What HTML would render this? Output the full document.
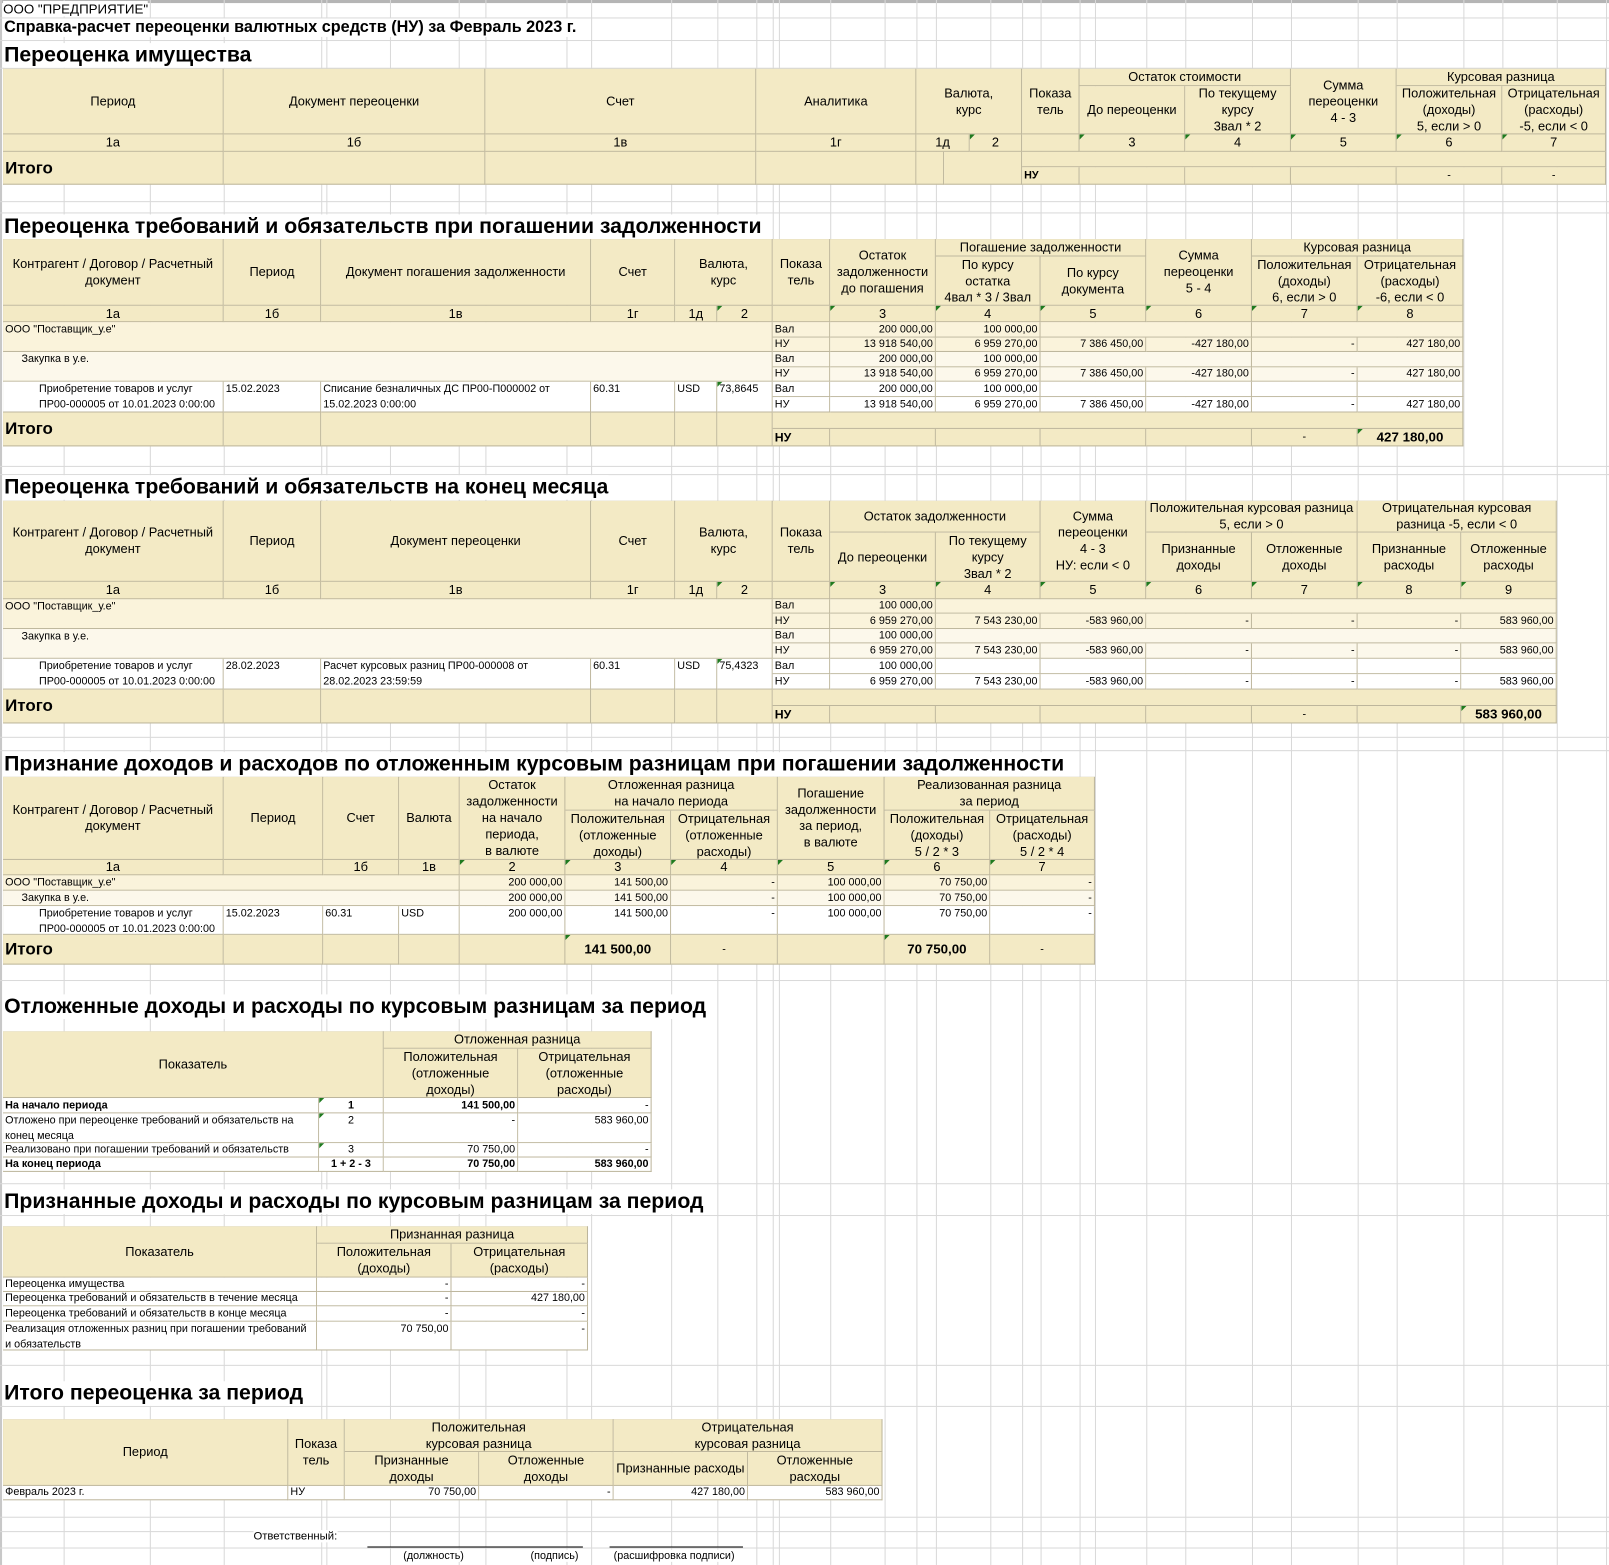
<!DOCTYPE html>
<html><head><meta charset="utf-8">
<style>
html,body{margin:0;padding:0;background:#fff;width:1609px;height:1565px;overflow:hidden}
#w{position:absolute;left:0;top:0;width:1568px;height:1525px;transform:scale(1.0262);transform-origin:0 0;font-family:"Liberation Sans Narrow","Arial Narrow","Liberation Sans","Noto Sans CJK SC",sans-serif;color:#000}
.vl{position:absolute;top:0;height:1525px;width:1px;background:#d9d9d9}
.hl{position:absolute;left:0;width:1568px;height:1px;background:#d9d9d9}
.f{position:absolute;box-sizing:border-box;border-top:1px solid #a9a9a9;border-left:1px solid #b8b29a}
.c{position:absolute;box-sizing:border-box;border-right:1px solid #bdb69c;border-bottom:1px solid #bdb69c;display:flex;align-items:center;justify-content:center;text-align:center;font-size:12.5px;line-height:16px;overflow:hidden;white-space:nowrap}
.h{background:#f3eac5}
.g{background:#faf3db}
.s{background:#fcf8eb}
.w{background:#fff}
.l{justify-content:flex-start;text-align:left;padding-left:2px}
.r{justify-content:flex-end;text-align:right;padding-right:2px}
.d{font-size:10.5px;line-height:14.5px}
.tp{align-items:flex-start}
.b{font-weight:bold}
.it{font-size:16.5px;font-weight:bold;font-family:"Liberation Sans",sans-serif}
.t{position:absolute;font-weight:bold;font-size:20.7px;font-family:"Liberation Sans",sans-serif;white-space:nowrap}
.tri::before{content:"";position:absolute;left:0;top:0;border-top:5px solid #1f7a1f;border-right:5px solid transparent}
.tx{position:absolute;white-space:nowrap;font-size:11px}
</style></head><body><div id="w">
<div style="position:absolute;left:0;top:0;width:1568px;height:3px;background:#b5b5b5"></div>
<div style="position:absolute;left:0;top:0;width:2px;height:1525px;background:#c8c8c8"></div>
<div class="vl" style="left:62px"></div><div class="vl" style="left:146px"></div><div class="vl" style="left:218px"></div><div class="vl" style="left:313px"></div><div class="vl" style="left:318px"></div><div class="vl" style="left:380px"></div><div class="vl" style="left:447px"></div><div class="vl" style="left:473px"></div><div class="vl" style="left:552px"></div><div class="vl" style="left:576px"></div><div class="vl" style="left:654px"></div><div class="vl" style="left:699px"></div><div class="vl" style="left:737px"></div><div class="vl" style="left:753px"></div><div class="vl" style="left:759px"></div><div class="vl" style="left:809px"></div><div class="vl" style="left:862px"></div><div class="vl" style="left:893px"></div><div class="vl" style="left:912px"></div><div class="vl" style="left:965px"></div><div class="vl" style="left:996px"></div><div class="vl" style="left:1014px"></div><div class="vl" style="left:1052px"></div><div class="vl" style="left:1067px"></div><div class="vl" style="left:1117px"></div><div class="vl" style="left:1155px"></div><div class="vl" style="left:1220px"></div><div class="vl" style="left:1258px"></div><div class="vl" style="left:1323px"></div><div class="vl" style="left:1361px"></div><div class="vl" style="left:1426px"></div><div class="vl" style="left:1464px"></div><div class="vl" style="left:1517px"></div><div class="vl" style="left:1565px"></div>
<div class="hl" style="top:17px"></div><div class="hl" style="top:39px"></div><div class="hl" style="top:66px"></div><div class="hl" style="top:196px"></div><div class="hl" style="top:207px"></div><div class="hl" style="top:454px"></div><div class="hl" style="top:462px"></div><div class="hl" style="top:718px"></div><div class="hl" style="top:731px"></div><div class="hl" style="top:955px"></div><div class="hl" style="top:1153px"></div><div class="hl" style="top:1184px"></div><div class="hl" style="top:1330px"></div><div class="hl" style="top:1370px"></div><div class="hl" style="top:1478px"></div><div class="hl" style="top:1492px"></div><div class="hl" style="top:1508px"></div>

<div class="tx" style="left:3px;top:1px;font-size:13px;background:#fff">ООО "ПРЕДПРИЯТИЕ"</div>
<div class="tx" style="left:4px;top:18px;font-size:15.8px;font-weight:bold;font-family:'Liberation Sans',sans-serif;background:#fff">Справка-расчет переоценки валютных средств (НУ) за Февраль 2023 г.</div>
<div class="t" style="left:4px;top:42px;background:#fff">Переоценка имущества</div>

<!-- S1 -->
<div class="f" style="left:3px;top:67px;width:1562px;height:113px"></div>
<div class="c h" style="left:3px;top:67px;width:215px;height:64px">Период</div>
<div class="c h" style="left:218px;top:67px;width:255px;height:64px">Документ переоценки</div>
<div class="c h" style="left:473px;top:67px;width:264px;height:64px">Счет</div>
<div class="c h" style="left:737px;top:67px;width:156px;height:64px">Аналитика</div>
<div class="c h" style="left:893px;top:67px;width:103px;height:64px">Валюта,<br>курс</div>
<div class="c h" style="left:996px;top:67px;width:56px;height:64px">Показа<br>тель</div>
<div class="c h" style="left:1052px;top:67px;width:206px;height:17px">Остаток стоимости</div>
<div class="c h" style="left:1052px;top:84px;width:103px;height:47px">До переоценки</div>
<div class="c h" style="left:1155px;top:84px;width:103px;height:47px">По текущему<br>курсу<br>3вал * 2</div>
<div class="c h" style="left:1258px;top:67px;width:103px;height:64px">Сумма<br>переоценки<br>4 - 3</div>
<div class="c h" style="left:1361px;top:67px;width:204px;height:17px">Курсовая разница</div>
<div class="c h" style="left:1361px;top:84px;width:103px;height:47px">Положительная<br>(доходы)<br>5, если &gt; 0</div>
<div class="c h" style="left:1464px;top:84px;width:101px;height:47px">Отрицательная<br>(расходы)<br>-5, если &lt; 0</div>
<div class="c h" style="left:3px;top:131px;width:215px;height:17px">1а</div>
<div class="c h" style="left:218px;top:131px;width:255px;height:17px">1б</div>
<div class="c h" style="left:473px;top:131px;width:264px;height:17px">1в</div>
<div class="c h" style="left:737px;top:131px;width:156px;height:17px">1г</div>
<div class="c h" style="left:893px;top:131px;width:52px;height:17px">1д</div>
<div class="c h tri" style="left:945px;top:131px;width:51px;height:17px">2</div>
<div class="c h" style="left:996px;top:131px;width:56px;height:17px"></div>
<div class="c h tri" style="left:1052px;top:131px;width:103px;height:17px">3</div>
<div class="c h tri" style="left:1155px;top:131px;width:103px;height:17px">4</div>
<div class="c h tri" style="left:1258px;top:131px;width:103px;height:17px">5</div>
<div class="c h tri" style="left:1361px;top:131px;width:103px;height:17px">6</div>
<div class="c h tri" style="left:1464px;top:131px;width:101px;height:17px">7</div>
<div class="c h l it" style="left:3px;top:148px;width:215px;height:32px">Итого</div>
<div class="c h" style="left:218px;top:148px;width:255px;height:32px"></div>
<div class="c h" style="left:473px;top:148px;width:264px;height:32px"></div>
<div class="c h" style="left:737px;top:148px;width:156px;height:32px"></div>
<div class="c h" style="left:893px;top:148px;width:27px;height:32px"></div>
<div class="c h" style="left:920px;top:148px;width:76px;height:32px"></div>
<div class="c h" style="left:996px;top:148px;width:569px;height:15px"></div>
<div class="c h l b d" style="left:996px;top:163px;width:56px;height:17px">НУ</div>
<div class="c h" style="left:1052px;top:163px;width:103px;height:17px"></div>
<div class="c h" style="left:1155px;top:163px;width:103px;height:17px"></div>
<div class="c h" style="left:1258px;top:163px;width:103px;height:17px"></div>
<div class="c h d" style="left:1361px;top:163px;width:103px;height:17px">-</div>
<div class="c h d" style="left:1464px;top:163px;width:101px;height:17px">-</div>

<!-- S2 -->
<div class="t" style="left:4px;top:209px;background:#fff">Переоценка требований и обязательств при погашении задолженности</div>
<div class="f" style="left:3px;top:233px;width:1423px;height:202px"></div>
<div class="c h" style="left:3px;top:233px;width:215px;height:65px">Контрагент / Договор / Расчетный<br>документ</div>
<div class="c h" style="left:218px;top:233px;width:95px;height:65px">Период</div>
<div class="c h" style="left:313px;top:233px;width:263px;height:65px">Документ погашения задолженности</div>
<div class="c h" style="left:576px;top:233px;width:82px;height:65px">Счет</div>
<div class="c h" style="left:658px;top:233px;width:95px;height:65px">Валюта,<br>курс</div>
<div class="c h" style="left:753px;top:233px;width:56px;height:65px">Показа<br>тель</div>
<div class="c h" style="left:809px;top:233px;width:103px;height:65px">Остаток<br>задолженности<br>до погашения</div>
<div class="c h" style="left:912px;top:233px;width:205px;height:17px">Погашение задолженности</div>
<div class="c h" style="left:912px;top:250px;width:102px;height:48px">По курсу<br>остатка<br>4вал * 3 / 3вал</div>
<div class="c h" style="left:1014px;top:250px;width:103px;height:48px">По курсу<br>документа</div>
<div class="c h" style="left:1117px;top:233px;width:103px;height:65px">Сумма<br>переоценки<br>5 - 4</div>
<div class="c h" style="left:1220px;top:233px;width:206px;height:17px">Курсовая разница</div>
<div class="c h" style="left:1220px;top:250px;width:103px;height:48px">Положительная<br>(доходы)<br>6, если &gt; 0</div>
<div class="c h" style="left:1323px;top:250px;width:103px;height:48px">Отрицательная<br>(расходы)<br>-6, если &lt; 0</div>
<div class="c h" style="left:3px;top:298px;width:215px;height:16px">1а</div>
<div class="c h" style="left:218px;top:298px;width:95px;height:16px">1б</div>
<div class="c h" style="left:313px;top:298px;width:263px;height:16px">1в</div>
<div class="c h" style="left:576px;top:298px;width:82px;height:16px">1г</div>
<div class="c h" style="left:658px;top:298px;width:41px;height:16px">1д</div>
<div class="c h tri" style="left:699px;top:298px;width:54px;height:16px">2</div>
<div class="c h" style="left:753px;top:298px;width:56px;height:16px"></div>
<div class="c h tri" style="left:809px;top:298px;width:103px;height:16px">3</div>
<div class="c h tri" style="left:912px;top:298px;width:102px;height:16px">4</div>
<div class="c h tri" style="left:1014px;top:298px;width:103px;height:16px">5</div>
<div class="c h tri" style="left:1117px;top:298px;width:103px;height:16px">6</div>
<div class="c h tri" style="left:1220px;top:298px;width:103px;height:16px">7</div>
<div class="c h tri" style="left:1323px;top:298px;width:103px;height:16px">8</div>
<div class="c g l d tp" style="left:3px;top:314px;width:750px;height:29px">ООО "Поставщик_у.е"</div>
<div class="c s l d tp" style="left:3px;top:343px;width:750px;height:29px;padding-left:18px">Закупка в у.е.</div>
<div class="c w l d tp" style="left:3px;top:372px;width:215px;height:30px;padding-left:35px">Приобретение товаров и услуг<br>ПР00-000005 от 10.01.2023 0:00:00</div>
<div class="c w l d tp" style="left:218px;top:372px;width:95px;height:30px">15.02.2023</div>
<div class="c w l d tp" style="left:313px;top:372px;width:263px;height:30px">Списание безналичных ДС ПР00-П000002 от<br>15.02.2023 0:00:00</div>
<div class="c w l d tp" style="left:576px;top:372px;width:82px;height:30px">60.31</div>
<div class="c w l d tp" style="left:658px;top:372px;width:41px;height:30px">USD</div>
<div class="c w l d tp tri" style="left:699px;top:372px;width:54px;height:30px">73,8645</div>

<div class="c g l d" style="left:753px;top:314px;width:56px;height:15px">Вал</div><div class="c g r d" style="left:809px;top:314px;width:103px;height:15px">200 000,00</div><div class="c g r d" style="left:912px;top:314px;width:102px;height:15px">100 000,00</div><div class="c g" style="left:1014px;top:314px;width:206px;height:15px"></div><div class="c g" style="left:1220px;top:314px;width:206px;height:15px"></div>
<div class="c g l d" style="left:753px;top:329px;width:56px;height:14px">НУ</div><div class="c g r d" style="left:809px;top:329px;width:103px;height:14px">13 918 540,00</div><div class="c g r d" style="left:912px;top:329px;width:102px;height:14px">6 959 270,00</div><div class="c g r d" style="left:1014px;top:329px;width:103px;height:14px">7 386 450,00</div><div class="c g r d" style="left:1117px;top:329px;width:103px;height:14px">-427 180,00</div><div class="c g r d" style="left:1220px;top:329px;width:103px;height:14px">-</div><div class="c g r d" style="left:1323px;top:329px;width:103px;height:14px">427 180,00</div>
<div class="c s l d" style="left:753px;top:343px;width:56px;height:15px">Вал</div><div class="c s r d" style="left:809px;top:343px;width:103px;height:15px">200 000,00</div><div class="c s r d" style="left:912px;top:343px;width:102px;height:15px">100 000,00</div><div class="c s" style="left:1014px;top:343px;width:206px;height:15px"></div><div class="c s" style="left:1220px;top:343px;width:206px;height:15px"></div>
<div class="c s l d" style="left:753px;top:358px;width:56px;height:14px">НУ</div><div class="c s r d" style="left:809px;top:358px;width:103px;height:14px">13 918 540,00</div><div class="c s r d" style="left:912px;top:358px;width:102px;height:14px">6 959 270,00</div><div class="c s r d" style="left:1014px;top:358px;width:103px;height:14px">7 386 450,00</div><div class="c s r d" style="left:1117px;top:358px;width:103px;height:14px">-427 180,00</div><div class="c s r d" style="left:1220px;top:358px;width:103px;height:14px">-</div><div class="c s r d" style="left:1323px;top:358px;width:103px;height:14px">427 180,00</div>
<div class="c w l d" style="left:753px;top:372px;width:56px;height:15px">Вал</div><div class="c w r d" style="left:809px;top:372px;width:103px;height:15px">200 000,00</div><div class="c w r d" style="left:912px;top:372px;width:102px;height:15px">100 000,00</div><div class="c w" style="left:1014px;top:372px;width:103px;height:15px"></div><div class="c w" style="left:1117px;top:372px;width:103px;height:15px"></div><div class="c w" style="left:1220px;top:372px;width:103px;height:15px"></div><div class="c w" style="left:1323px;top:372px;width:103px;height:15px"></div>
<div class="c w l d" style="left:753px;top:387px;width:56px;height:15px">НУ</div><div class="c w r d" style="left:809px;top:387px;width:103px;height:15px">13 918 540,00</div><div class="c w r d" style="left:912px;top:387px;width:102px;height:15px">6 959 270,00</div><div class="c w r d" style="left:1014px;top:387px;width:103px;height:15px">7 386 450,00</div><div class="c w r d" style="left:1117px;top:387px;width:103px;height:15px">-427 180,00</div><div class="c w r d" style="left:1220px;top:387px;width:103px;height:15px">-</div><div class="c w r d" style="left:1323px;top:387px;width:103px;height:15px">427 180,00</div>
<div class="c h l it" style="left:3px;top:402px;width:215px;height:33px">Итого</div>
<div class="c h" style="left:218px;top:402px;width:95px;height:33px"></div><div class="c h" style="left:313px;top:402px;width:263px;height:33px"></div><div class="c h" style="left:576px;top:402px;width:82px;height:33px"></div><div class="c h" style="left:658px;top:402px;width:41px;height:33px"></div><div class="c h" style="left:699px;top:402px;width:54px;height:33px"></div>
<div class="c h" style="left:753px;top:402px;width:673px;height:16px"></div>
<div class="c h l b" style="left:753px;top:418px;width:56px;height:17px;font-size:12px">НУ</div><div class="c h" style="left:809px;top:418px;width:103px;height:17px"></div><div class="c h" style="left:912px;top:418px;width:102px;height:17px"></div><div class="c h" style="left:1014px;top:418px;width:103px;height:17px"></div><div class="c h" style="left:1117px;top:418px;width:103px;height:17px"></div><div class="c h d" style="left:1220px;top:418px;width:103px;height:17px">-</div><div class="c h b tri" style="left:1323px;top:418px;width:103px;height:17px;font-size:13px">427 180,00</div>

<!-- S3 -->
<div class="t" style="left:4px;top:463px;background:#fff">Переоценка требований и обязательств на конец месяца</div>
<div class="f" style="left:3px;top:488px;width:1514px;height:217px"></div>
<div class="c h" style="left:3px;top:488px;width:215px;height:79px">Контрагент / Договор / Расчетный<br>документ</div>
<div class="c h" style="left:218px;top:488px;width:95px;height:79px">Период</div>
<div class="c h" style="left:313px;top:488px;width:263px;height:79px">Документ переоценки</div>
<div class="c h" style="left:576px;top:488px;width:82px;height:79px">Счет</div>
<div class="c h" style="left:658px;top:488px;width:95px;height:79px">Валюта,<br>курс</div>
<div class="c h" style="left:753px;top:488px;width:56px;height:79px">Показа<br>тель</div>
<div class="c h" style="left:809px;top:488px;width:205px;height:31px">Остаток задолженности</div>
<div class="c h" style="left:809px;top:519px;width:103px;height:48px">До переоценки</div>
<div class="c h" style="left:912px;top:519px;width:102px;height:48px">По текущему<br>курсу<br>3вал * 2</div>
<div class="c h" style="left:1014px;top:488px;width:103px;height:79px">Сумма<br>переоценки<br>4 - 3<br>НУ: если &lt; 0</div>
<div class="c h" style="left:1117px;top:488px;width:206px;height:31px">Положительная курсовая разница<br>5, если &gt; 0</div>
<div class="c h" style="left:1117px;top:519px;width:103px;height:48px">Признанные<br>доходы</div>
<div class="c h" style="left:1220px;top:519px;width:103px;height:48px">Отложенные<br>доходы</div>
<div class="c h" style="left:1323px;top:488px;width:194px;height:31px">Отрицательная курсовая<br>разница -5, если &lt; 0</div>
<div class="c h" style="left:1323px;top:519px;width:101px;height:48px">Признанные<br>расходы</div>
<div class="c h" style="left:1424px;top:519px;width:93px;height:48px">Отложенные<br>расходы</div>
<div class="c h" style="left:3px;top:567px;width:215px;height:17px">1а</div>
<div class="c h" style="left:218px;top:567px;width:95px;height:17px">1б</div>
<div class="c h" style="left:313px;top:567px;width:263px;height:17px">1в</div>
<div class="c h" style="left:576px;top:567px;width:82px;height:17px">1г</div>
<div class="c h" style="left:658px;top:567px;width:41px;height:17px">1д</div>
<div class="c h tri" style="left:699px;top:567px;width:54px;height:17px">2</div>
<div class="c h" style="left:753px;top:567px;width:56px;height:17px"></div>
<div class="c h tri" style="left:809px;top:567px;width:103px;height:17px">3</div>
<div class="c h tri" style="left:912px;top:567px;width:102px;height:17px">4</div>
<div class="c h tri" style="left:1014px;top:567px;width:103px;height:17px">5</div>
<div class="c h tri" style="left:1117px;top:567px;width:103px;height:17px">6</div>
<div class="c h tri" style="left:1220px;top:567px;width:103px;height:17px">7</div>
<div class="c h tri" style="left:1323px;top:567px;width:101px;height:17px">8</div>
<div class="c h tri" style="left:1424px;top:567px;width:93px;height:17px">9</div>
<div class="c g l d tp" style="left:3px;top:584px;width:750px;height:29px">ООО "Поставщик_у.е"</div>
<div class="c s l d tp" style="left:3px;top:613px;width:750px;height:29px;padding-left:18px">Закупка в у.е.</div>
<div class="c w l d tp" style="left:3px;top:642px;width:215px;height:30px;padding-left:35px">Приобретение товаров и услуг<br>ПР00-000005 от 10.01.2023 0:00:00</div>
<div class="c w l d tp" style="left:218px;top:642px;width:95px;height:30px">28.02.2023</div>
<div class="c w l d tp" style="left:313px;top:642px;width:263px;height:30px">Расчет курсовых разниц ПР00-000008 от<br>28.02.2023 23:59:59</div>
<div class="c w l d tp" style="left:576px;top:642px;width:82px;height:30px">60.31</div>
<div class="c w l d tp" style="left:658px;top:642px;width:41px;height:30px">USD</div>
<div class="c w l d tp tri" style="left:699px;top:642px;width:54px;height:30px">75,4323</div>

<div class="c g l d" style="left:753px;top:584px;width:56px;height:14px">Вал</div><div class="c g r d" style="left:809px;top:584px;width:103px;height:14px">100 000,00</div><div class="c g" style="left:912px;top:584px;width:605px;height:14px"></div>
<div class="c g l d" style="left:753px;top:598px;width:56px;height:15px">НУ</div><div class="c g r d" style="left:809px;top:598px;width:103px;height:15px">6 959 270,00</div><div class="c g r d" style="left:912px;top:598px;width:102px;height:15px">7 543 230,00</div><div class="c g r d" style="left:1014px;top:598px;width:103px;height:15px">-583 960,00</div><div class="c g r d" style="left:1117px;top:598px;width:103px;height:15px">-</div><div class="c g r d" style="left:1220px;top:598px;width:103px;height:15px">-</div><div class="c g r d" style="left:1323px;top:598px;width:101px;height:15px">-</div><div class="c g r d" style="left:1424px;top:598px;width:93px;height:15px">583 960,00</div>
<div class="c s l d" style="left:753px;top:613px;width:56px;height:14px">Вал</div><div class="c s r d" style="left:809px;top:613px;width:103px;height:14px">100 000,00</div><div class="c s" style="left:912px;top:613px;width:605px;height:14px"></div>
<div class="c s l d" style="left:753px;top:627px;width:56px;height:15px">НУ</div><div class="c s r d" style="left:809px;top:627px;width:103px;height:15px">6 959 270,00</div><div class="c s r d" style="left:912px;top:627px;width:102px;height:15px">7 543 230,00</div><div class="c s r d" style="left:1014px;top:627px;width:103px;height:15px">-583 960,00</div><div class="c s r d" style="left:1117px;top:627px;width:103px;height:15px">-</div><div class="c s r d" style="left:1220px;top:627px;width:103px;height:15px">-</div><div class="c s r d" style="left:1323px;top:627px;width:101px;height:15px">-</div><div class="c s r d" style="left:1424px;top:627px;width:93px;height:15px">583 960,00</div>
<div class="c w l d" style="left:753px;top:642px;width:56px;height:15px">Вал</div><div class="c w r d" style="left:809px;top:642px;width:103px;height:15px">100 000,00</div><div class="c w" style="left:912px;top:642px;width:102px;height:15px"></div><div class="c w" style="left:1014px;top:642px;width:103px;height:15px"></div><div class="c w" style="left:1117px;top:642px;width:103px;height:15px"></div><div class="c w" style="left:1220px;top:642px;width:103px;height:15px"></div><div class="c w" style="left:1323px;top:642px;width:101px;height:15px"></div><div class="c w" style="left:1424px;top:642px;width:93px;height:15px"></div>
<div class="c w l d" style="left:753px;top:657px;width:56px;height:15px">НУ</div><div class="c w r d" style="left:809px;top:657px;width:103px;height:15px">6 959 270,00</div><div class="c w r d" style="left:912px;top:657px;width:102px;height:15px">7 543 230,00</div><div class="c w r d" style="left:1014px;top:657px;width:103px;height:15px">-583 960,00</div><div class="c w r d" style="left:1117px;top:657px;width:103px;height:15px">-</div><div class="c w r d" style="left:1220px;top:657px;width:103px;height:15px">-</div><div class="c w r d" style="left:1323px;top:657px;width:101px;height:15px">-</div><div class="c w r d" style="left:1424px;top:657px;width:93px;height:15px">583 960,00</div>
<div class="c h l it" style="left:3px;top:672px;width:215px;height:33px">Итого</div>
<div class="c h" style="left:218px;top:672px;width:95px;height:33px"></div><div class="c h" style="left:313px;top:672px;width:263px;height:33px"></div><div class="c h" style="left:576px;top:672px;width:82px;height:33px"></div><div class="c h" style="left:658px;top:672px;width:41px;height:33px"></div><div class="c h" style="left:699px;top:672px;width:54px;height:33px"></div>
<div class="c h" style="left:753px;top:672px;width:764px;height:16px"></div>
<div class="c h l b" style="left:753px;top:688px;width:56px;height:17px;font-size:12px">НУ</div><div class="c h" style="left:809px;top:688px;width:103px;height:17px"></div><div class="c h" style="left:912px;top:688px;width:102px;height:17px"></div><div class="c h" style="left:1014px;top:688px;width:103px;height:17px"></div><div class="c h" style="left:1117px;top:688px;width:103px;height:17px"></div><div class="c h d" style="left:1220px;top:688px;width:103px;height:17px">-</div><div class="c h" style="left:1323px;top:688px;width:101px;height:17px"></div><div class="c h b tri" style="left:1424px;top:688px;width:93px;height:17px;font-size:13px">583 960,00</div>

<!-- S4 -->
<div class="t" style="left:4px;top:733px;background:#fff">Признание доходов и расходов по отложенным курсовым разницам при погашении задолженности</div>
<div class="f" style="left:3px;top:757px;width:1064px;height:183px"></div>
<div class="c h" style="left:3px;top:757px;width:215px;height:81px">Контрагент / Договор / Расчетный<br>документ</div>
<div class="c h" style="left:218px;top:757px;width:97px;height:81px">Период</div>
<div class="c h" style="left:315px;top:757px;width:74px;height:81px">Счет</div>
<div class="c h" style="left:389px;top:757px;width:59px;height:81px">Валюта</div>
<div class="c h" style="left:448px;top:757px;width:103px;height:81px">Остаток<br>задолженности<br>на начало<br>периода,<br>в валюте</div>
<div class="c h" style="left:551px;top:757px;width:207px;height:33px">Отложенная разница<br>на начало периода</div>
<div class="c h" style="left:551px;top:790px;width:103px;height:48px">Положительная<br>(отложенные<br>доходы)</div>
<div class="c h" style="left:654px;top:790px;width:104px;height:48px">Отрицательная<br>(отложенные<br>расходы)</div>
<div class="c h" style="left:758px;top:757px;width:104px;height:81px">Погашение<br>задолженности<br>за период,<br>в валюте</div>
<div class="c h" style="left:862px;top:757px;width:205px;height:33px">Реализованная разница<br>за период</div>
<div class="c h" style="left:862px;top:790px;width:103px;height:48px">Положительная<br>(доходы)<br>5 / 2 * 3</div>
<div class="c h" style="left:965px;top:790px;width:102px;height:48px">Отрицательная<br>(расходы)<br>5 / 2 * 4</div>
<div class="c h" style="left:3px;top:838px;width:215px;height:15px">1а</div>
<div class="c h" style="left:218px;top:838px;width:97px;height:15px"></div>
<div class="c h" style="left:315px;top:838px;width:74px;height:15px">1б</div>
<div class="c h" style="left:389px;top:838px;width:59px;height:15px">1в</div>
<div class="c h tri" style="left:448px;top:838px;width:103px;height:15px">2</div>
<div class="c h tri" style="left:551px;top:838px;width:103px;height:15px">3</div>
<div class="c h tri" style="left:654px;top:838px;width:104px;height:15px">4</div>
<div class="c h tri" style="left:758px;top:838px;width:104px;height:15px">5</div>
<div class="c h tri" style="left:862px;top:838px;width:103px;height:15px">6</div>
<div class="c h tri" style="left:965px;top:838px;width:102px;height:15px">7</div>
<div class="c g l d" style="left:3px;top:853px;width:445px;height:15px">ООО "Поставщик_у.е"</div><div class="c g r d" style="left:448px;top:853px;width:103px;height:15px">200 000,00</div><div class="c g r d" style="left:551px;top:853px;width:103px;height:15px">141 500,00</div><div class="c g r d" style="left:654px;top:853px;width:104px;height:15px">-</div><div class="c g r d" style="left:758px;top:853px;width:104px;height:15px">100 000,00</div><div class="c g r d" style="left:862px;top:853px;width:103px;height:15px">70 750,00</div><div class="c g r d" style="left:965px;top:853px;width:102px;height:15px">-</div>
<div class="c s l d" style="left:3px;top:868px;width:445px;height:15px;padding-left:18px">Закупка в у.е.</div><div class="c s r d" style="left:448px;top:868px;width:103px;height:15px">200 000,00</div><div class="c s r d" style="left:551px;top:868px;width:103px;height:15px">141 500,00</div><div class="c s r d" style="left:654px;top:868px;width:104px;height:15px">-</div><div class="c s r d" style="left:758px;top:868px;width:104px;height:15px">100 000,00</div><div class="c s r d" style="left:862px;top:868px;width:103px;height:15px">70 750,00</div><div class="c s r d" style="left:965px;top:868px;width:102px;height:15px">-</div>
<div class="c w l d tp" style="left:3px;top:883px;width:215px;height:28px;padding-left:35px">Приобретение товаров и услуг<br>ПР00-000005 от 10.01.2023 0:00:00</div><div class="c w l d tp" style="left:218px;top:883px;width:97px;height:28px">15.02.2023</div><div class="c w l d tp" style="left:315px;top:883px;width:74px;height:28px">60.31</div><div class="c w l d tp" style="left:389px;top:883px;width:59px;height:28px">USD</div><div class="c w r d tp" style="left:448px;top:883px;width:103px;height:28px">200 000,00</div><div class="c w r d tp" style="left:551px;top:883px;width:103px;height:28px">141 500,00</div><div class="c w r d tp" style="left:654px;top:883px;width:104px;height:28px">-</div><div class="c w r d tp" style="left:758px;top:883px;width:104px;height:28px">100 000,00</div><div class="c w r d tp" style="left:862px;top:883px;width:103px;height:28px">70 750,00</div><div class="c w r d tp" style="left:965px;top:883px;width:102px;height:28px">-</div>
<div class="c h l it" style="left:3px;top:911px;width:215px;height:29px">Итого</div><div class="c h" style="left:218px;top:911px;width:97px;height:29px"></div><div class="c h" style="left:315px;top:911px;width:74px;height:29px"></div><div class="c h" style="left:389px;top:911px;width:59px;height:29px"></div><div class="c h" style="left:448px;top:911px;width:103px;height:29px"></div><div class="c h b tri" style="left:551px;top:911px;width:103px;height:29px;font-size:13px">141 500,00</div><div class="c h d" style="left:654px;top:911px;width:104px;height:29px">-</div><div class="c h" style="left:758px;top:911px;width:104px;height:29px"></div><div class="c h b tri" style="left:862px;top:911px;width:103px;height:29px;font-size:13px">70 750,00</div><div class="c h d" style="left:965px;top:911px;width:102px;height:29px">-</div>

<!-- S5 -->
<div class="t" style="left:4px;top:969px;background:#fff">Отложенные доходы и расходы по курсовым разницам за период</div>
<div class="f" style="left:3px;top:1005px;width:632px;height:137px"></div>
<div class="c h" style="left:3px;top:1005px;width:371px;height:65px">Показатель</div>
<div class="c h" style="left:374px;top:1005px;width:261px;height:17px">Отложенная разница</div>
<div class="c h" style="left:374px;top:1022px;width:131px;height:48px">Положительная<br>(отложенные<br>доходы)</div>
<div class="c h" style="left:505px;top:1022px;width:130px;height:48px">Отрицательная<br>(отложенные<br>расходы)</div>
<div class="c w l d b" style="left:3px;top:1070px;width:308px;height:15px">На начало периода</div><div class="c w d b tri" style="left:311px;top:1070px;width:63px;height:15px">1</div><div class="c w r d b" style="left:374px;top:1070px;width:131px;height:15px">141 500,00</div><div class="c w r d" style="left:505px;top:1070px;width:130px;height:15px">-</div>
<div class="c w l d tp" style="left:3px;top:1085px;width:308px;height:29px">Отложено при переоценке требований и обязательств на<br>конец месяца</div><div class="c w d tp tri" style="left:311px;top:1085px;width:63px;height:29px">2</div><div class="c w r d tp" style="left:374px;top:1085px;width:131px;height:29px">-</div><div class="c w r d tp" style="left:505px;top:1085px;width:130px;height:29px">583 960,00</div>
<div class="c w l d" style="left:3px;top:1114px;width:308px;height:14px">Реализовано при погашении требований и обязательств</div><div class="c w d tri" style="left:311px;top:1114px;width:63px;height:14px">3</div><div class="c w r d" style="left:374px;top:1114px;width:131px;height:14px">70 750,00</div><div class="c w r d" style="left:505px;top:1114px;width:130px;height:14px">-</div>
<div class="c w l d b" style="left:3px;top:1128px;width:308px;height:14px">На конец периода</div><div class="c w d b" style="left:311px;top:1128px;width:63px;height:14px">1 + 2 - 3</div><div class="c w r d b" style="left:374px;top:1128px;width:131px;height:14px">70 750,00</div><div class="c w r d b" style="left:505px;top:1128px;width:130px;height:14px">583 960,00</div>

<!-- S6 -->
<div class="t" style="left:4px;top:1159px;background:#fff">Признанные доходы и расходы по курсовым разницам за период</div>
<div class="f" style="left:3px;top:1195px;width:570px;height:121px"></div>
<div class="c h" style="left:3px;top:1195px;width:306px;height:50px">Показатель</div>
<div class="c h" style="left:309px;top:1195px;width:264px;height:17px">Признанная разница</div>
<div class="c h" style="left:309px;top:1212px;width:131px;height:33px">Положительная<br>(доходы)</div>
<div class="c h" style="left:440px;top:1212px;width:133px;height:33px">Отрицательная<br>(расходы)</div>
<div class="c w l d" style="left:3px;top:1245px;width:306px;height:14px">Переоценка имущества</div><div class="c w r d" style="left:309px;top:1245px;width:131px;height:14px">-</div><div class="c w r d" style="left:440px;top:1245px;width:133px;height:14px">-</div>
<div class="c w l d" style="left:3px;top:1259px;width:306px;height:14px">Переоценка требований и обязательств в течение месяца</div><div class="c w r d" style="left:309px;top:1259px;width:131px;height:14px">-</div><div class="c w r d" style="left:440px;top:1259px;width:133px;height:14px">427 180,00</div>
<div class="c w l d" style="left:3px;top:1273px;width:306px;height:15px">Переоценка требований и обязательств в конце месяца</div><div class="c w r d" style="left:309px;top:1273px;width:131px;height:15px">-</div><div class="c w r d" style="left:440px;top:1273px;width:133px;height:15px">-</div>
<div class="c w l d tp" style="left:3px;top:1288px;width:306px;height:28px">Реализация отложенных разниц при погашении требований<br>и обязательств</div><div class="c w r d tp" style="left:309px;top:1288px;width:131px;height:28px">70 750,00</div><div class="c w r d tp" style="left:440px;top:1288px;width:133px;height:28px">-</div>

<!-- S7 -->
<div class="t" style="left:4px;top:1346px;background:#fff">Итого переоценка за период</div>
<div class="f" style="left:3px;top:1383px;width:857px;height:79px"></div>
<div class="c h" style="left:3px;top:1383px;width:278px;height:65px">Период</div>
<div class="c h" style="left:281px;top:1383px;width:55px;height:65px">Показа<br>тель</div>
<div class="c h" style="left:336px;top:1383px;width:262px;height:32px">Положительная<br>курсовая разница</div>
<div class="c h" style="left:336px;top:1415px;width:131px;height:33px">Признанные<br>доходы</div>
<div class="c h" style="left:467px;top:1415px;width:131px;height:33px">Отложенные<br>доходы</div>
<div class="c h" style="left:598px;top:1383px;width:262px;height:32px">Отрицательная<br>курсовая разница</div>
<div class="c h" style="left:598px;top:1415px;width:131px;height:33px">Признанные расходы</div>
<div class="c h" style="left:729px;top:1415px;width:131px;height:33px">Отложенные<br>расходы</div>
<div class="c w l d" style="left:3px;top:1448px;width:278px;height:14px">Февраль 2023 г.</div><div class="c w l d" style="left:281px;top:1448px;width:55px;height:14px">НУ</div><div class="c w r d" style="left:336px;top:1448px;width:131px;height:14px">70 750,00</div><div class="c w r d" style="left:467px;top:1448px;width:131px;height:14px">-</div><div class="c w r d" style="left:598px;top:1448px;width:131px;height:14px">427 180,00</div><div class="c w r d" style="left:729px;top:1448px;width:131px;height:14px">583 960,00</div>

<div class="tx" style="left:247px;top:1491px;background:#fff">Ответственный:</div>
<div style="position:absolute;left:358px;top:1507px;width:210px;height:1px;background:#000"></div>
<div style="position:absolute;left:594px;top:1507px;width:130px;height:1px;background:#000"></div>
<div class="tx" style="left:393px;top:1510px;font-size:10.5px;background:#fff">(должность)</div>
<div class="tx" style="left:517px;top:1510px;font-size:10.5px;background:#fff">(подпись)</div>
<div class="tx" style="left:598px;top:1510px;font-size:10.5px;background:#fff">(расшифровка подписи)</div>
</div></body></html>
